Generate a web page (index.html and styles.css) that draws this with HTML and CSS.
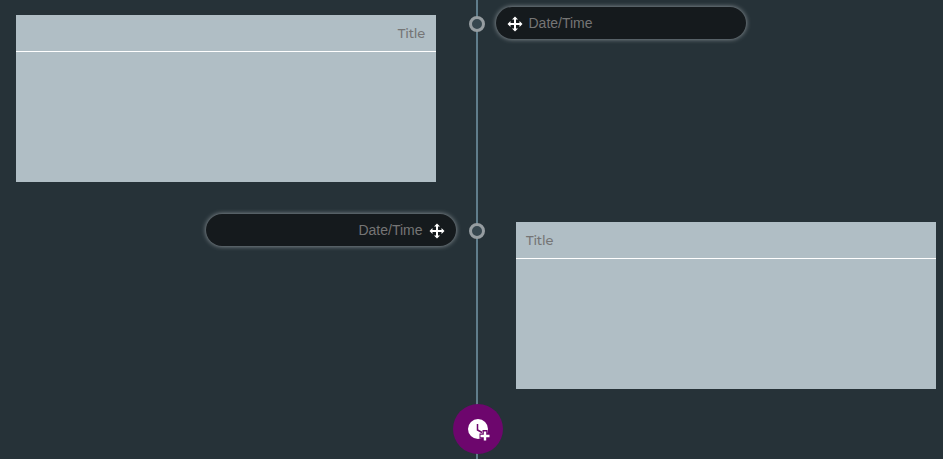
FILE: index.html
```html
<!DOCTYPE html>
<html lang="en">
<head>
<meta charset="utf-8">
<title>Timeline</title>
<link rel="stylesheet" href="styles.css">
</head>
<body>
<main class="timeline">
  <section class="event">
    <article class="card card-left"><header class="card-title">Title</header></article>
    <span class="marker"></span>
    <div class="date date-right">
      <svg class="move" viewBox="0 0 16 16"><path d="M8 .5 11 3.500H9V7h3.500V5l3 3-3 3V9H9v3.500h2L8 15.500 5 12.500h2V9H3.500v2L.5 8l3-3v2H7V3.500H5z"/></svg>
      <span>Date/Time</span>
    </div>
  </section>
  <section class="event">
    <div class="date date-left">
      <span>Date/Time</span>
      <svg class="move" viewBox="0 0 16 16"><path d="M8 .5 11 3.500H9V7h3.500V5l3 3-3 3V9H9v3.500h2L8 15.500 5 12.500h2V9H3.500v2L.5 8l3-3v2H7V3.500H5z"/></svg>
    </div>
    <span class="marker"></span>
    <article class="card card-right"><header class="card-title">Title</header></article>
  </section>
  <button class="add" aria-label="Add event">
    <svg class="clock" viewBox="0 0 24 24"><circle class="face" cx="11" cy="11" r="10"/><path class="hands" d="M10.500 6v6l4.500 2.500"/><path class="plus-edge" d="M18 12v11M12.500 18h11"/><path class="plus" d="M18 13.500v9M13.500 18h9"/></svg>
  </button>
</main>
</body>
</html>
```
FILE: styles.css
```css
* { box-sizing: border-box; }
body { margin: 0; background: #263238; }
.timeline {
  width: 943px;
  height: 459px;
  padding-top: 7px;
  overflow: hidden;
  background: linear-gradient(#607d8b, #607d8b) 476px 0 / 2px 100% no-repeat;
}
.event {
  display: grid;
  grid-template-columns: 469px 16px 458px;
  align-items: start;
  height: 207px;
}
.card {
  width: 420px;
  height: 167px;
  margin-top: 8px;
  background: #b0bec5;
}
.card-left { margin-left: 16px; text-align: right; }
.card-right { margin-left: 31px; }
.card-title {
  height: 37px;
  padding: 0 10px;
  border-bottom: 1px solid #fff;
  color: #757575;
  font: 500 13px/37px Montserrat, Inter, sans-serif;
  letter-spacing: -.2px;
}
.card-left .card-title { padding-right: 11px; }
.marker {
  width: 16px;
  height: 16px;
  margin-top: 9px;
  border: 3px solid #969da1;
  border-radius: 50%;
  background: #37474f;
}
.date {
  display: flex;
  align-items: center;
  width: 250px;
  height: 32px;
  border-radius: 16px;
  background: #151a1d;
  box-shadow: 0 0 5px #9aa1a5;
  color: #757575;
  font: 14px/32px "Liberation Sans", Arial, sans-serif;
}
.date-right { gap: 5.500px; margin-left: 11px; padding-left: 11px; }
.date-left { gap: 6.500px; justify-self: end; justify-content: flex-end; margin-right: 13px; padding-right: 11px; }
.move { width: 16px; height: 16px; margin-top: 2px; fill: #fff; }
.add {
  display: grid;
  place-items: center;
  width: 50px;
  height: 50px;
  margin: -17px 0 0 453.400px;
  padding: 2px 0 0 1px;
  border: 0;
  border-radius: 50%;
  background: #6d066d;
}
.clock { width: 24px; height: 24px; }
.face { fill: #fff; }
.hands { fill: none; stroke: #6d066d; stroke-width: 1.5; }
.plus-edge { stroke: #6d066d; stroke-width: 5; }
.plus { stroke: #fff; stroke-width: 2.4; }
```
